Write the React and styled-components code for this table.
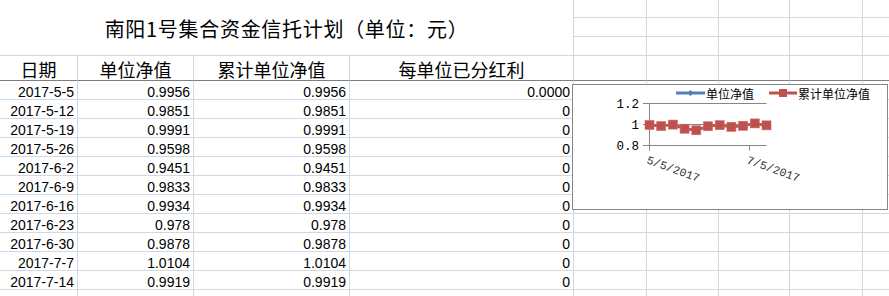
import styled, { createGlobalStyle } from "styled-components";

const GlobalStyle = createGlobalStyle`
  html, body {
    margin: 0;
    padding: 0;
    background: #ffffff;
    overflow: hidden;
  }
`;

const Page = styled.div`
  position: relative;
  width: 889px;
  height: 296px;
  overflow: hidden;
  background: #ffffff;
`;

const Sheet = styled.div`
  display: grid;
  grid-template-columns: 78px 116px 156px 224px 73px 72px 71px 73px 73px;
  grid-template-rows: 18px 19px 19px 25px;
  grid-auto-rows: 19px;
`;

const Cell = styled.div`
  box-sizing: border-box;
  border-right: 1px solid #d0d7e5;
  border-bottom: 1px solid ${(p) => (p.$head ? "#7f7f7f" : "#d0d7e5")};
  display: flex;
  align-items: flex-end;
  justify-content: ${(p) => (p.$center ? "center" : "flex-end")};
  padding: 0 3px;
  font-family: "Liberation Sans", Arial, sans-serif;
  font-size: 14px;
  line-height: 14px;
  color: #000000;
  white-space: nowrap;
  overflow: hidden;
`;

const HeadCell = styled(Cell)`
  font-family: "Noto Sans CJK SC", sans-serif;
  font-size: 18px;
  line-height: 18px;
  padding-bottom: 2px;
`;

const Title = styled(Cell)`
  grid-column: 1 / 5;
  grid-row: 1 / 4;
  align-items: center;
  justify-content: center;
  padding-top: 3px;
  font-family: "Noto Sans CJK SC", sans-serif;
  font-size: 20px;
  line-height: 22px;
  letter-spacing: 0.7px;
`;

const ChartBox = styled.div`
  position: absolute;
  left: 572px;
  top: 84px;
  width: 316px;
  height: 126px;
  box-sizing: border-box;
  border: 1px solid #868686;
  background: #ffffff;
`;

const rows = [
  ["2017-5-5", "0.9956", "0.9956", "0.0000"],
  ["2017-5-12", "0.9851", "0.9851", "0"],
  ["2017-5-19", "0.9991", "0.9991", "0"],
  ["2017-5-26", "0.9598", "0.9598", "0"],
  ["2017-6-2", "0.9451", "0.9451", "0"],
  ["2017-6-9", "0.9833", "0.9833", "0"],
  ["2017-6-16", "0.9934", "0.9934", "0"],
  ["2017-6-23", "0.978", "0.978", "0"],
  ["2017-6-30", "0.9878", "0.9878", "0"],
  ["2017-7-7", "1.0104", "1.0104", "0"],
  ["2017-7-14", "0.9919", "0.9919", "0"],
];

const headers = ["日期", "单位净值", "累计单位净值", "每单位已分红利"];
const extraCols = 5;

const cjk = '"Noto Sans CJK SC", sans-serif';
const mono = '"Liberation Mono", monospace';

// plot geometry inside the chart box (svg coords)
const x0 = 76.5;
const xStep = 11.7;
const yAt = (v) => 60.5 - (v - 0.8) * 105;

function Chart() {
  const pts = rows.map((r, i) => [x0 + i * xStep, yAt(parseFloat(r[1]))]);
  const line = pts.map((p) => p.join(",")).join(" ");
  return (
    <ChartBox>
      <svg width="314" height="124" viewBox="0 0 314 124">
        {/* legend */}
        <line x1="103" x2="132" y1="8" y2="8" stroke="#4f81bd" strokeWidth="3" />
        <polygon points="117.5,5 120.5,8 117.5,11 114.5,8" fill="#4f81bd" />
        <text x="133" y="13.5" fontSize="12" fontFamily={cjk} fill="#000">
          单位净值
        </text>
        <line x1="196" x2="224" y1="8" y2="8" stroke="#c0504d" strokeWidth="3" />
        <rect x="206" y="4" width="8" height="8" fill="#c0504d" />
        <text x="225" y="13.5" fontSize="12" fontFamily={cjk} fill="#000">
          累计单位净值
        </text>

        {/* grid and axes */}
        {[1.2, 1, 0.8].map((v) => (
          <g key={v}>
            <line x1="70" x2="193.5" y1={yAt(v)} y2={yAt(v)} stroke="#868686" strokeWidth="1" />
            <text
              x="66"
              y={yAt(v) + 4.5}
              textAnchor="end"
              fontSize="12.5"
              fontFamily={mono}
              fill="#000"
            >
              {v === 1 ? "1" : v.toFixed(1)}
            </text>
          </g>
        ))}
        <line x1={x0} x2={x0} y1={yAt(1.2)} y2={yAt(0.8) + 5} stroke="#868686" strokeWidth="1" />
        <line x1="176.5" x2="176.5" y1={yAt(0.8)} y2={yAt(0.8) + 5} stroke="#868686" strokeWidth="1" />
        <text x="73" y="78" fontSize="11.5" fontFamily={mono} fill="#333" transform="rotate(20 73 78)">
          5/5/2017
        </text>
        <text x="173" y="78" fontSize="11.5" fontFamily={mono} fill="#333" transform="rotate(20 173 78)">
          7/5/2017
        </text>

        {/* series */}
        <polyline points={line} fill="none" stroke="#4f81bd" strokeWidth="2.5" />
        <polyline points={line} fill="none" stroke="#c0504d" strokeWidth="2.5" />
        {pts.map(([x, y], i) => (
          <rect key={i} x={x - 4.5} y={y - 4.5} width="9" height="9" fill="#c0504d" stroke="#cc6a67" strokeWidth="0.6" />
        ))}
      </svg>
    </ChartBox>
  );
}

export default function App() {
  const blank = (key, head) => <Cell key={key} $head={head} />;
  return (
    <Page>
      <GlobalStyle />
      <Sheet>
        <Title>南阳1号集合资金信托计划（单位：元）</Title>
        {Array.from({ length: 3 * extraCols }, (_, i) => blank("t" + i))}

        {headers.map((h) => (
          <HeadCell key={h} $head $center>
            {h}
          </HeadCell>
        ))}
        {Array.from({ length: extraCols }, (_, i) => blank("h" + i, true))}

        {rows.map((r, ri) => [
          ...r.map((v, ci) => <Cell key={ri + "-" + ci}>{v}</Cell>),
          ...Array.from({ length: extraCols }, (_, i) => blank(ri + "e" + i)),
        ])}
        {Array.from({ length: 9 }, (_, i) => blank("z" + i))}
      </Sheet>
      <Chart />
    </Page>
  );
}
